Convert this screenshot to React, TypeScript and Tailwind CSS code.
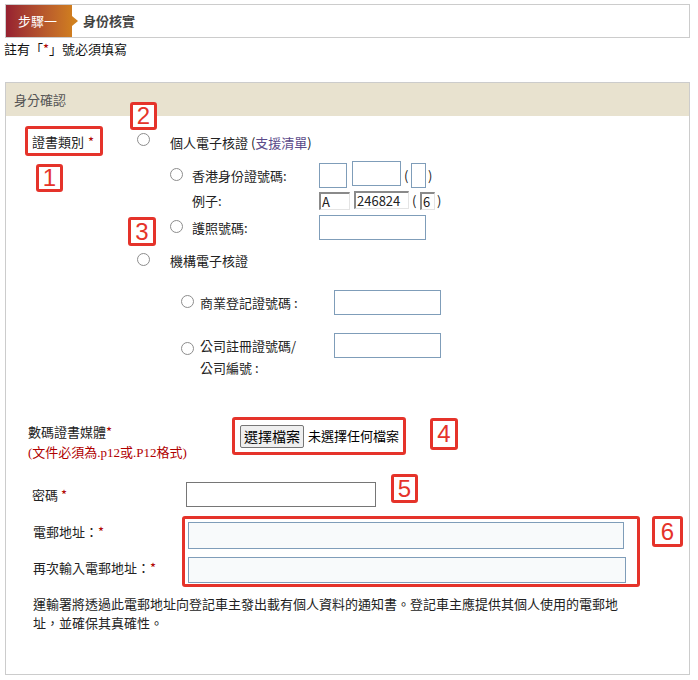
const Radio = () => (
  <span className="inline-block w-[13px] h-[13px] shrink-0 rounded-full border border-[#8d8d8d] bg-white" />
)

const Box = ({ w, h = 25 }: { w: string; h?: number }) => (
  <span className={`inline-block ${w} border border-[#7f9db9] bg-white`} style={{ height: h }} />
)

const Sample = ({ w, value }: { w: string; value: string }) => (
  <span className={`inline-flex items-center ${w} h-[18px] border-t-2 border-l-2 border-t-[#8a8a8a] border-l-[#8a8a8a] border-b border-r border-b-[#e4e4e4] border-r-[#e4e4e4] bg-white pl-[1px] text-[13px] leading-none text-[#222]`}>
    {value}
  </span>
)

const Tag = ({ n, className }: { n: string; className: string }) => (
  <div
    className={`absolute flex items-center justify-center border-[3px] border-[#e5332a] rounded-[3px] bg-white text-[#e5332a] text-[24px] leading-none font-light ${className}`}
    style={{ fontFamily: '"Liberation Sans", Arial, sans-serif' }}
  >
    {n}
  </div>
)

const Star = () => <span className="text-[#b00000]">*</span>

export default function App() {
  return (
    <div
      className="relative w-[698px] h-[680px] bg-white text-[13px] text-[#222]"
      style={{ fontFamily: '"Noto Sans CJK TC", "Liberation Sans", sans-serif' }}
    >
      {/* step bar */}
      <div className="pt-[4px]">
        <div className="ml-[5px] w-[685px] h-[34px] border border-[#cccccc] flex items-center">
          <div className="relative h-full w-[66px] bg-gradient-to-r from-[#962030] to-[#cf7d1f] flex items-center pl-[12px] text-white">
            步驟一
            <span className="absolute right-[-6px] top-[11px] w-0 h-0 border-y-[5px] border-y-transparent border-l-[6px] border-l-[#d0801f]" />
          </div>
          <div className="ml-[11px] font-bold text-[#444]">身份核實</div>
        </div>
      </div>
      <div className="ml-[4px] mt-[2px] leading-[18px] text-[#111]">
        註有「<Star />」號必須填寫
      </div>

      {/* panel */}
      <div className="mt-[24px] ml-[5px] w-[685px] h-[593px] border border-[#cccccc]">
        <div className="h-[33px] bg-[#e8e2cf] flex items-center pl-[8px] text-[#555]">身分確認</div>

        {/* row A */}
        <div className="mt-[10px] flex items-center">
          <div className="ml-[19px] w-[78px] h-[30px] border-[3px] border-[#e5332a] rounded-[3px] flex items-center pl-[4px] pt-[2px]">
            證書類別 <span className="ml-[4px] text-[#b00000]">*</span>
          </div>
          <span className="ml-[34px]"><Radio /></span>
          <span className="ml-[20px] pt-[3px]">
            個人電子核證 (<span className="text-[#5b4b8a]">支援清單</span>)
          </span>
        </div>

        {/* row B */}
        <div className="mt-[7px] flex items-center h-[25px]">
          <span className="ml-[164px]"><Radio /></span>
          <span className="ml-[9px] w-[127px]">香港身份證號碼:</span>
          <Box w="w-[28px]" />
          <span className="ml-[5px]"><Box w="w-[49px]" /></span>
          <span className="ml-[3px] w-[7px]">(</span>
          <Box w="w-[15px]" />
          <span className="ml-[2px]">)</span>
        </div>

        {/* row C */}
        <div className="mt-[4px] flex items-center h-[18px]">
          <span className="ml-[186px] w-[127px]">例子:</span>
          <Sample w="w-[31px]" value="A" />
          <span className="ml-[4px]"><Sample w="w-[55px]" value="246824" /></span>
          <span className="ml-[3px] w-[8px]">(</span>
          <Sample w="w-[15px]" value="6" />
          <span className="ml-[2px]">)</span>
        </div>

        {/* row D */}
        <div className="mt-[5px] flex items-center h-[25px]">
          <span className="ml-[164px]"><Radio /></span>
          <span className="ml-[9px] w-[127px]">護照號碼:</span>
          <Box w="w-[107px]" />
        </div>

        {/* row E */}
        <div className="mt-[11px] flex items-center h-[20px]">
          <span className="ml-[131px]"><Radio /></span>
          <span className="ml-[20px]">機構電子核證</span>
        </div>

        {/* row F */}
        <div className="mt-[19px] flex items-center h-[25px]">
          <span className="ml-[175px]"><Radio /></span>
          <span className="ml-[6px] w-[134px]">商業登記證號碼 :</span>
          <Box w="w-[107px]" />
        </div>

        {/* row G */}
        <div className="mt-[18px] flex items-start">
          <span className="ml-[175px] mt-[7px]"><Radio /></span>
          <span className="ml-[6px] w-[134px] mt-[2px] leading-[22px]">
            公司註冊證號碼/
            <br />
            公司編號 :
          </span>
          <Box w="w-[107px]" />
        </div>

        {/* row H */}
        <div className="mt-[38px] flex items-start">
          <div className="ml-[22px] w-[204px] mt-[4px] leading-[21px]">
            <div>數碼證書媒體<Star /></div>
            <div className="text-[#b00000]" style={{ fontFamily: '"Liberation Serif", "Noto Sans CJK TC", serif' }}>
              (文件必須為.p12或.P12格式)
            </div>
          </div>
          <div className="w-[174px] h-[38px] border-[3px] border-[#e5332a] rounded-[3px] flex items-center pl-[5px] text-[13px] text-black whitespace-nowrap">
            <span className="h-[23px] w-[64px] shrink-0 flex items-center justify-center border border-[#767676] rounded-[2px] bg-[#efefef] text-[14px]">選擇檔案</span>
            <span className="ml-[4px] text-[13px]">未選擇任何檔案</span>
          </div>
        </div>

        {/* row I */}
        <div className="mt-[19px] flex items-center h-[25px]">
          <span className="ml-[26px] w-[154px]">密碼 <Star /></span>
          <span className="w-[190px] h-[25px] border border-[#767676] bg-white" />
        </div>

        {/* row J */}
        <div className="mt-[9px] flex items-start">
          <div className="ml-[27px] w-[149px] pt-[6px] flex flex-col gap-[16px]">
            <div className="h-[20px] leading-[20px]">電郵地址：<Star /></div>
            <div className="h-[20px] leading-[20px]">再次輸入電郵地址：<Star /></div>
          </div>
          <div className="w-[458px] h-[71px] border-[3px] border-[#e5332a] rounded-[3px] pl-[3px] pt-[3px] flex flex-col gap-[8px]">
            <span className="w-[436px] h-[27px] border border-[#7f9db9] bg-[#f8fafb]" />
            <span className="w-[438px] h-[26px] border border-[#7f9db9] bg-[#f8fafb]" />
          </div>
        </div>

        <p className="ml-[27px] mt-[7px] w-[590px] leading-[19px] text-[#222]">
          運輸署將透過此電郵地址向登記車主發出載有個人資料的通知書。登記車主應提供其個人使用的電郵地址，並確保其真確性。
        </p>
      </div>

      <Tag n="1" className="left-[36px] top-[164px] w-[27px] h-[28px]" />
      <Tag n="2" className="left-[130px] top-[102px] w-[27px] h-[28px]" />
      <Tag n="3" className="left-[128px] top-[217px] w-[28px] h-[29px]" />
      <Tag n="4" className="left-[430px] top-[418px] w-[28px] h-[32px]" />
      <Tag n="5" className="left-[391px] top-[474px] w-[27px] h-[29px]" />
      <Tag n="6" className="left-[652px] top-[516px] w-[31px] h-[31px]" />
    </div>
  )
}
